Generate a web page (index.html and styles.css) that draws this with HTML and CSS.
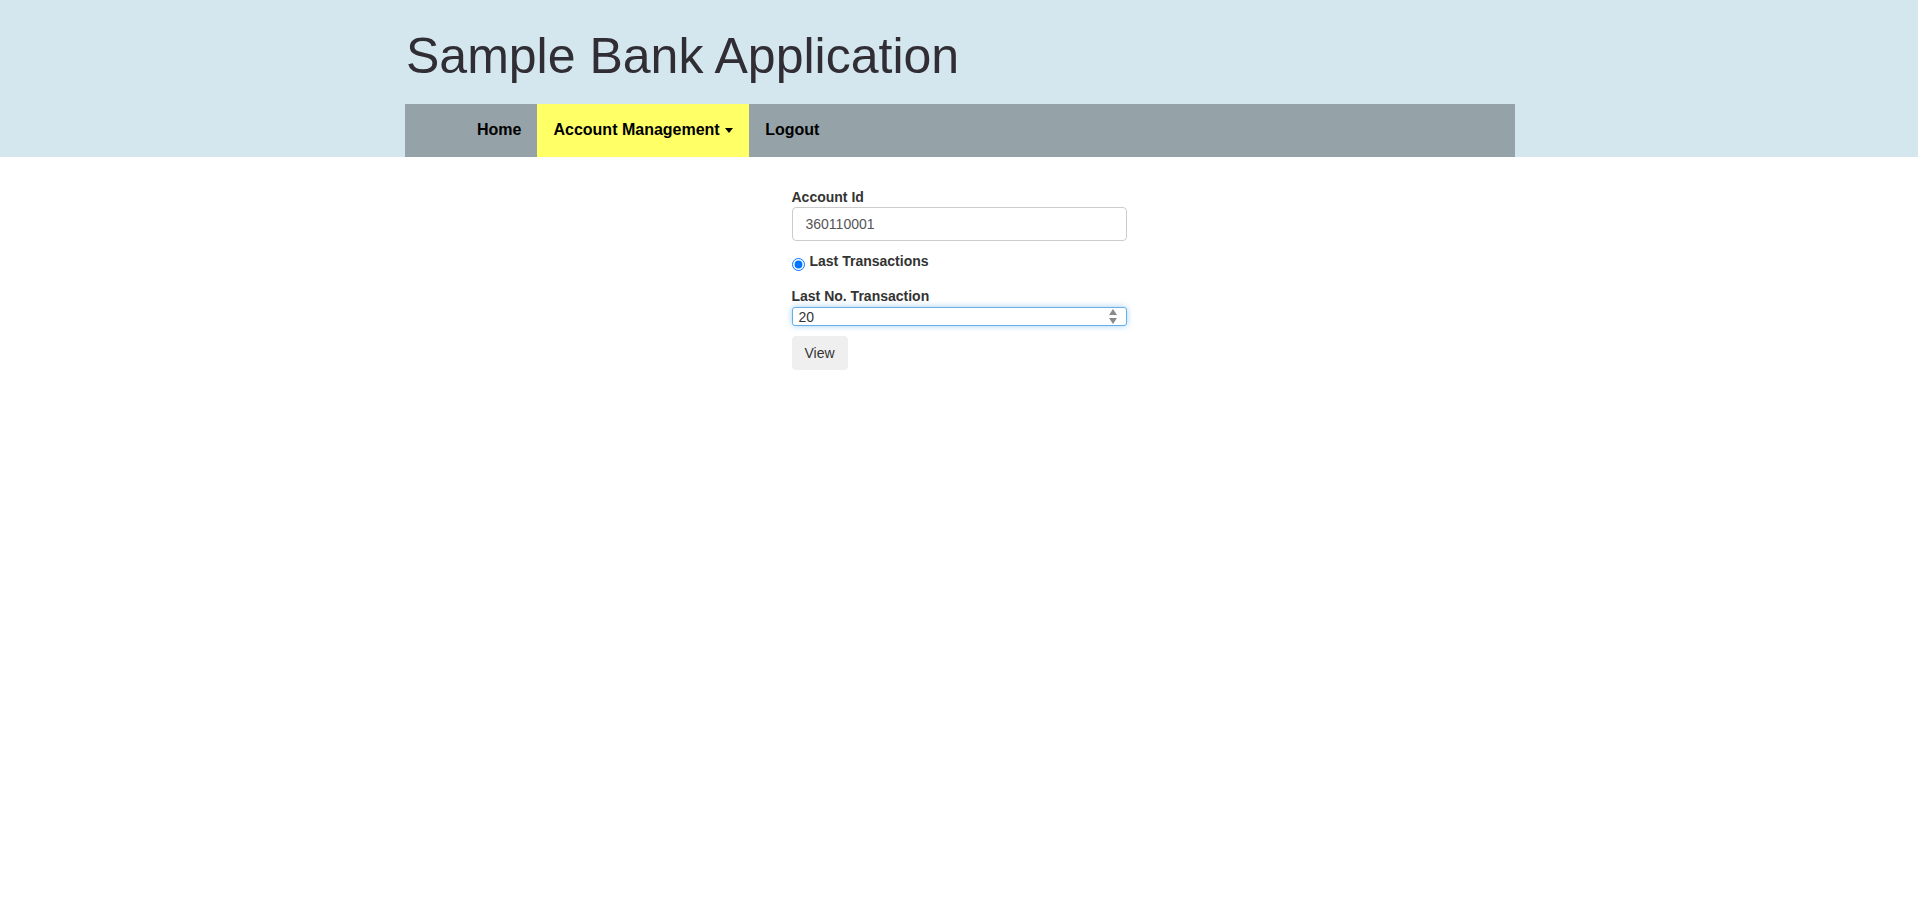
FILE: index.html
```html
<!DOCTYPE html>
<html lang="en">
<head>
<meta charset="utf-8">
<title>Sample Bank Application</title>
<link rel="stylesheet" href="styles.css">
</head>
<body>
<header class="site-header">
  <div class="container">
    <h1 class="site-title">Sample Bank Application</h1>
    <nav class="navbar">
      <ul class="nav-list">
        <li class="nav-item"><a class="nav-link" href="#">Home</a></li>
        <li class="nav-item active"><a class="nav-link" href="#">Account Management <span class="caret"></span></a></li>
        <li class="nav-item"><a class="nav-link" href="#">Logout</a></li>
      </ul>
    </nav>
  </div>
</header>
<main class="content">
  <form class="txn-form">
    <label class="field-label" for="acc">Account Id</label>
    <input class="text-input" id="acc" type="text" value="360110001">
    <div class="radio-row">
      <input class="radio" type="radio" name="mode" id="last" checked>
      <label class="radio-label" for="last">Last Transactions</label>
    </div>
    <label class="field-label second" for="num">Last No. Transaction</label>
    <div class="num-wrap">
      <input class="num-input" id="num" type="number" value="20">
      <span class="spinner"><span class="spin-up"></span><span class="spin-down"></span></span>
    </div>
    <button class="btn" type="button">View</button>
  </form>
</main>
</body>
</html>
```
FILE: styles.css
```css
* { box-sizing: border-box; }
html, body { margin: 0; padding: 0; }
body {
  font-family: "Liberation Sans", Arial, sans-serif;
  font-size: 14px;
  color: #333;
  background: #fff;
}
.site-header {
  background: #d4e6ee;
}
.container {
  width: 1110px;
  margin-left: calc(50% - 554px);
}
.site-title {
  margin: 0;
  height: 104px;
  padding-top: 31px;
  padding-left: 1px;
  font-size: 50px;
  line-height: 50px;
  font-weight: normal;
  color: #302e34;
}
.navbar {
  background: #95a3a9;
  height: 53px;
}
.nav-list {
  list-style: none;
  margin: 0;
  padding: 0 0 0 56px;
  display: flex;
  height: 53px;
}
.nav-item { height: 53px; }
.nav-link {
  display: block;
  height: 53px;
  padding: 0 16px 2px;
  line-height: 51px;
  font-size: 16px;
  font-weight: bold;
  color: #000;
  text-decoration: none;
}
.nav-item.active .nav-link { background: #ffff66; }
.caret {
  display: inline-block;
  width: 0;
  height: 0;
  margin-left: 1px;
  vertical-align: middle;
  border-top: 5px solid #000;
  border-left: 4px solid transparent;
  border-right: 4px solid transparent;
}
.content {
  display: flex;
  justify-content: center;
  padding-top: 30px;
}
.txn-form {
  width: 335px;
  display: flex;
  flex-direction: column;
  align-items: flex-start;
}
.field-label {
  font-weight: bold;
  font-size: 14px;
  line-height: 20px;
  color: #333;
}
.field-label.second { margin-top: 15px; }
.text-input {
  width: 100%;
  height: 34px;
  padding: 6px 13px;
  border: 1px solid #ccc;
  border-radius: 4px;
  font-family: inherit;
  font-size: 14px;
  color: #555;
  outline: none;
}
.radio-row {
  display: flex;
  align-items: flex-start;
  margin-top: 10px;
  height: 20px;
}
.radio {
  margin: 7px 5px 0 0;
  width: 13px;
  height: 13px;
}
.radio-label {
  font-weight: bold;
  font-size: 14px;
  line-height: 20px;
}
.num-wrap {
  position: relative;
  width: 100%;
  margin-top: 1px;
}
.num-input {
  display: block;
  width: 100%;
  height: 19px;
  padding: 0 6px;
  border: 1px solid #66afe9;
  border-radius: 3px;
  box-shadow: 0 0 6px rgba(102, 175, 233, 0.6);
  font-family: inherit;
  font-size: 14px;
  color: #333;
  outline: none;
  -moz-appearance: textfield;
}
.num-input::-webkit-inner-spin-button,
.num-input::-webkit-outer-spin-button {
  -webkit-appearance: none;
  margin: 0;
}
.spinner {
  position: absolute;
  right: 10px;
  top: 2px;
  display: flex;
  flex-direction: column;
  gap: 3px;
  pointer-events: none;
}
.spin-up {
  width: 0;
  height: 0;
  border-bottom: 6px solid #8a8a8a;
  border-left: 4.5px solid transparent;
  border-right: 4.5px solid transparent;
}
.spin-down {
  width: 0;
  height: 0;
  border-top: 6px solid #8a8a8a;
  border-left: 4.5px solid transparent;
  border-right: 4.5px solid transparent;
}
.btn {
  margin-top: 10px;
  height: 34px;
  padding: 6px 12px;
  border: 1px solid #efefef;
  border-radius: 4px;
  background: #efefef;
  font-family: inherit;
  font-size: 14px;
  color: #333;
}
```
